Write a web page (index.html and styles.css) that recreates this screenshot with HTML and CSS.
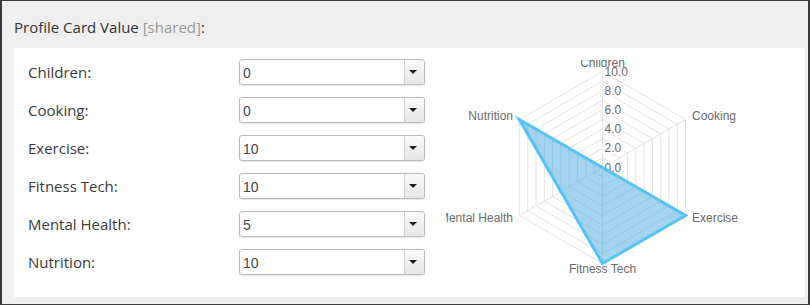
FILE: index.html
```html
<!DOCTYPE html>
<html lang="en">
<head>
    <meta charset="UTF-8">
    <meta name="viewport" content="width=device-width, initial-scale=1.0">
    <title>Profile Card Value</title>
    <link rel="stylesheet" href="styles.css">
</head>
<body>
    <div class="profile-card">
        <div class="card-title">Profile Card Value <span class="shared">[shared]</span>:</div>
        <div class="card-body">
            <div class="fields">
                <label class="field-label">Children:</label>
                <div class="dropdown"><span class="dropdown-value">0</span><span class="dropdown-btn"><span class="caret"></span></span></div>

                <label class="field-label">Cooking:</label>
                <div class="dropdown"><span class="dropdown-value">0</span><span class="dropdown-btn"><span class="caret"></span></span></div>

                <label class="field-label">Exercise:</label>
                <div class="dropdown"><span class="dropdown-value">10</span><span class="dropdown-btn"><span class="caret"></span></span></div>

                <label class="field-label">Fitness Tech:</label>
                <div class="dropdown"><span class="dropdown-value">10</span><span class="dropdown-btn"><span class="caret"></span></span></div>

                <label class="field-label">Mental Health:</label>
                <div class="dropdown"><span class="dropdown-value">5</span><span class="dropdown-btn"><span class="caret"></span></span></div>

                <label class="field-label">Nutrition:</label>
                <div class="dropdown"><span class="dropdown-value">10</span><span class="dropdown-btn"><span class="caret"></span></span></div>
            </div>

            <svg class="radar" width="312" height="230" viewBox="0 0 312 230">
                <g transform="translate(156.5,107.5)">
                    <!-- rings, one per step of 1.0 -->
                    <g class="radar-grid">
                        <polygon points="0,-9.6 8.31,-4.8 8.31,4.8 0,9.6 -8.31,4.8 -8.31,-4.8"/>
                        <polygon points="0,-19.2 16.63,-9.6 16.63,9.6 0,19.2 -16.63,9.6 -16.63,-9.6"/>
                        <polygon points="0,-28.8 24.94,-14.4 24.94,14.4 0,28.8 -24.94,14.4 -24.94,-14.4"/>
                        <polygon points="0,-38.4 33.26,-19.2 33.26,19.2 0,38.4 -33.26,19.2 -33.26,-19.2"/>
                        <polygon points="0,-48 41.57,-24 41.57,24 0,48 -41.57,24 -41.57,-24"/>
                        <polygon points="0,-57.6 49.88,-28.8 49.88,28.8 0,57.6 -49.88,28.8 -49.88,-28.8"/>
                        <polygon points="0,-67.2 58.2,-33.6 58.2,33.6 0,67.2 -58.2,33.6 -58.2,-33.6"/>
                        <polygon points="0,-76.8 66.51,-38.4 66.51,38.4 0,76.8 -66.51,38.4 -66.51,-38.4"/>
                        <polygon points="0,-86.4 74.82,-43.2 74.82,43.2 0,86.4 -74.82,43.2 -74.82,-43.2"/>
                        <polygon points="0,-96 83.14,-48 83.14,48 0,96 -83.14,48 -83.14,-48"/>
                        <line x1="0" y1="0" x2="0" y2="-96"/>
                        <line x1="0" y1="0" x2="83.14" y2="-48"/>
                        <line x1="0" y1="0" x2="83.14" y2="48"/>
                        <line x1="0" y1="0" x2="0" y2="96"/>
                        <line x1="0" y1="0" x2="-83.14" y2="48"/>
                        <line x1="0" y1="0" x2="-83.14" y2="-48"/>
                    </g>

                    <g class="radar-ticks">
                        <rect x="0" y="-102" width="27" height="12"/><text x="2" y="-96">10.0</text>
                        <rect x="0" y="-82.8" width="21" height="12"/><text x="2" y="-76.8">8.0</text>
                        <rect x="0" y="-63.6" width="21" height="12"/><text x="2" y="-57.6">6.0</text>
                        <rect x="0" y="-44.4" width="21" height="12"/><text x="2" y="-38.4">4.0</text>
                        <rect x="0" y="-25.2" width="21" height="12"/><text x="2" y="-19.2">2.0</text>
                        <rect x="0" y="-6" width="21" height="12"/><text x="2" y="0">0.0</text>
                    </g>

                    <g class="radar-labels">
                        <text x="0" y="-100.5" text-anchor="middle">Children</text>
                        <text class="mid" x="89.5" y="-52">Cooking</text>
                        <text class="mid" x="89.5" y="50">Exercise</text>
                        <text class="mid" x="0" y="101" text-anchor="middle">Fitness Tech</text>
                        <text class="mid" x="-89.5" y="50" text-anchor="end">Mental Health</text>
                        <text class="mid" x="-89.5" y="-51.5" text-anchor="end">Nutrition</text>
                    </g>

                    <!-- Children 0, Cooking 0, Exercise 10, Fitness Tech 10, Mental Health 5, Nutrition 10 -->
                    <polygon class="radar-data" points="0,0 0,0 83.14,48 0,96 -41.57,24 -83.14,-48"/>
                </g>
            </svg>
        </div>
    </div>
</body>
</html>
```

FILE: styles.css
```css
body {
    margin: 0;
    padding: 0;
    background: #fff;
    font-family: 'Open Sans', Arial, sans-serif;
    color: #333;
}

.profile-card {
    width: 806px;
    height: 303px;
    border-style: solid;
    border-color: #3a3a3a;
    border-width: 1px 2px 1px 2px;
    background: #efefef;
}

.card-title {
    padding: 16px 12px 11px;
    font-size: 15px;
    line-height: 20px;
    color: #333;
}

.shared {
    color: #999;
}

.card-body {
    display: flex;
    align-items: flex-start;
    height: 249px;
    margin: 0 3px 0 12px;
    padding: 11px 0 0 14px;
    box-sizing: border-box;
    background: #fff;
}

.fields {
    display: grid;
    grid-template-columns: 211px 186px;
    grid-auto-rows: 26px;
    row-gap: 12px;
    align-items: center;
}

.field-label {
    font-size: 15px;
    line-height: 20px;
    color: #3a3a3a;
}

.dropdown {
    display: flex;
    height: 26px;
    box-sizing: border-box;
    border: 1px solid #b8b8b8;
    border-radius: 3px;
    box-shadow: 0 1px 1px rgba(0, 0, 0, 0.08);
    background: #fff;
}

.dropdown-value {
    flex: 1;
    padding: 2px 0 0 3px;
    font-family: 'Liberation Sans', Arial, sans-serif;
    font-size: 14px;
    line-height: 22px;
    color: #444;
}

.dropdown-btn {
    display: flex;
    align-items: center;
    justify-content: center;
    width: 20px;
    padding-right: 3px;
    box-sizing: border-box;
    border-left: 1px solid #cfcfcf;
    border-radius: 0 2px 2px 0;
    background: linear-gradient(#fbfbfb, #e6e6e6);
}

.caret {
    width: 0;
    height: 0;
    border-left: 4px solid transparent;
    border-right: 4px solid transparent;
    border-top: 4px solid #1e1e1e;
}

.radar {
    display: block;
    margin: 1px 0 0 21px;
    font-family: 'Liberation Sans', Arial, sans-serif;
}

.radar-grid polygon,
.radar-grid line {
    fill: none;
    stroke: #e2e2e2;
    stroke-width: 1;
}

.radar-ticks rect {
    fill: rgba(255, 255, 255, 0.75);
}

.radar-ticks text {
    font-size: 12px;
    fill: #6a6a6a;
    dominant-baseline: central;
}

.radar-labels text {
    font-size: 12px;
    fill: #6a6a6a;
}

.radar-labels .mid {
    dominant-baseline: central;
}

.radar-data {
    fill: rgba(71, 169, 223, 0.5);
    stroke: #55c2f5;
    stroke-width: 3;
    stroke-linejoin: miter;
}
```
